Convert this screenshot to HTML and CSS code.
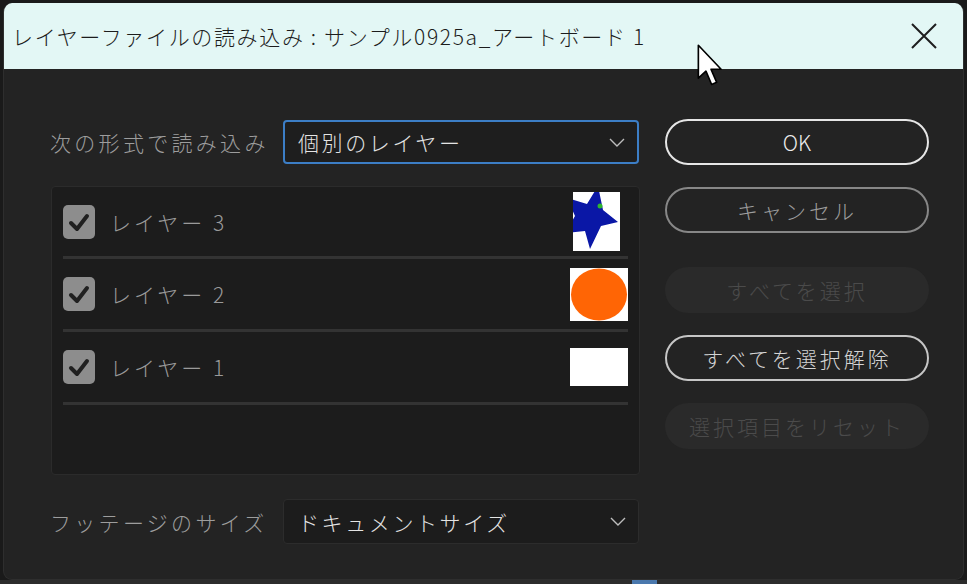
FILE: index.html
```html
<!DOCTYPE html>
<html lang="ja">
<head>
  <meta charset="UTF-8" />
  <meta name="viewport" content="width=device-width, initial-scale=1.0"/>
  <title>レイヤーファイルの読み込み</title>
  <link rel="stylesheet" href="styles.css">
</head>
<body>

  <div class="window">
    <div class="titlebar">
      <span class="title">レイヤーファイルの読み込み : サンプル0925a_アートボード 1</span>
      <svg class="close" width="26" height="26" viewBox="0 0 26 26">
        <path d="M1 1 L25 25 M25 1 L1 25" stroke="#1e1e1e" stroke-width="2" fill="none"/>
      </svg>
    </div>

    <div class="content">
      <div class="left">
        <div class="field">
          <label>次の形式で読み込み</label>
          <div class="select focused">
            <span>個別のレイヤー</span>
            <svg class="chevron" width="16" height="9" viewBox="0 0 16 9"><path d="M1 1 L8 8 L15 1" stroke="#bdbdbd" stroke-width="1.4" fill="none"/></svg>
          </div>
        </div>

        <div class="layers">
          <div class="layer">
            <span class="check"><svg width="32" height="34" viewBox="0 0 32 34"><path d="M8 18 L14 24 L24 11" stroke="#202020" stroke-width="4" fill="none" stroke-linecap="round" stroke-linejoin="round"/></svg></span>
            <span class="name">レイヤー 3</span>
            <span class="thumb-slot">
              <svg class="thumb star" width="47" height="59" viewBox="0 0 47 59">
                <rect width="47" height="59" fill="#fff"/>
                <polygon points="25,-6 30,18 45,30 28,34 17,57 12,39 -8,41 2,24 -6,6 14,12" fill="#0a17a6"/>
                <circle cx="27" cy="14" r="2.5" fill="#2fb52f"/>
              </svg>
            </span>
          </div>
          <div class="layer">
            <span class="check"><svg width="32" height="34" viewBox="0 0 32 34"><path d="M8 18 L14 24 L24 11" stroke="#202020" stroke-width="4" fill="none" stroke-linecap="round" stroke-linejoin="round"/></svg></span>
            <span class="name">レイヤー 2</span>
            <span class="thumb-slot">
              <svg class="thumb" width="58" height="53" viewBox="0 0 58 53">
                <rect width="58" height="53" fill="#fff"/>
                <ellipse cx="29" cy="26.5" rx="28" ry="26" fill="#ff6505"/>
              </svg>
            </span>
          </div>
          <div class="layer">
            <span class="check"><svg width="32" height="34" viewBox="0 0 32 34"><path d="M8 18 L14 24 L24 11" stroke="#202020" stroke-width="4" fill="none" stroke-linecap="round" stroke-linejoin="round"/></svg></span>
            <span class="name">レイヤー 1</span>
            <span class="thumb-slot">
              <span class="blank"></span>
            </span>
          </div>
        </div>

        <div class="field footage">
          <label>フッテージのサイズ</label>
          <div class="select">
            <span>ドキュメントサイズ</span>
            <svg class="chevron" width="16" height="9" viewBox="0 0 16 9"><path d="M1 1 L8 8 L15 1" stroke="#bdbdbd" stroke-width="1.4" fill="none"/></svg>
          </div>
        </div>
      </div>

      <div class="right">
        <button class="btn primary">OK</button>
        <button class="btn cancel">キャンセル</button>
        <button class="btn disabled gap">すべてを選択</button>
        <button class="btn secondary">すべてを選択解除</button>
        <button class="btn disabled">選択項目をリセット</button>
      </div>
    </div>

    <svg class="cursor" width="28" height="43" viewBox="0 0 22 34">
      <path d="M1 1 L1 27 L7 21.5 L11.5 32 L15.5 30.3 L11 20 L19 20 Z" fill="#fff" stroke="#000" stroke-width="1.3" stroke-linejoin="round"/>
    </svg>
  </div>

  <div class="taskbar"><span class="tab"></span></div>

</body>
</html>
```

FILE: styles.css
```css
body {
  margin: 0;
  background: #1a1a1a;
  font-family: "Noto Sans CJK JP", "Noto Sans", sans-serif;
  font-weight: 300;
  width: 967px;
  height: 584px;
  overflow: hidden;
}

.window {
  position: relative;
  margin: 3px 3px 0 3px;
  width: 961px;
  height: 577px;
  background: #232323;
  border-radius: 9px;
  overflow: hidden;
  box-sizing: border-box;
  border: 1px solid #2e2e2e;
  border-top: none;
}

.titlebar {
  height: 66px;
  background: #e3f7f5;
  display: flex;
  align-items: center;
  justify-content: space-between;
  padding: 0 26px 0 8px;
}

.title {
  font-size: 21px;
  letter-spacing: 1.65px;
  color: #1c1c1c;
  white-space: nowrap;
}

.content {
  display: flex;
  gap: 25px;
  padding: 51px 0 0 46px;
}

.left {
  width: 590px;
}

.field {
  display: flex;
  align-items: center;
}

.field label {
  width: 233px;
  font-size: 21px;
  letter-spacing: 3.3px;
  color: #9d9d9d;
  white-space: nowrap;
}

.select {
  width: 356px;
  height: 44px;
  box-sizing: border-box;
  border: 1px solid #2c2c2c;
  border-radius: 4px;
  background: #1c1c1c;
  display: flex;
  align-items: center;
  justify-content: space-between;
  padding: 0 12px 0 14px;
  font-size: 21px;
  letter-spacing: 2.6px;
  color: #e4e4e4;
}

.select.focused {
  border: 2px solid #3c7ec6;
  background: #1e1e1e;
  padding-left: 13px;
}

.layers {
  margin: 22px 0 0 1px;
  height: 289px;
  box-sizing: border-box;
  border: 1px solid #2b2b2b;
  border-radius: 4px;
  background: #1c1c1c;
}

.layer {
  margin: 0 11px 0 11px;
  height: 72px;
  box-sizing: border-box;
  border-bottom: 3px solid #333333;
  display: flex;
  align-items: center;
}

.layer + .layer {
  height: 73px;
}

.check {
  width: 32px;
  height: 34px;
  border-radius: 5px;
  background: #8d8d8d;
  display: flex;
}

.name {
  margin-left: 15px;
  font-size: 21px;
  letter-spacing: 3px;
  color: #9a9a9a;
  flex: 1;
}

.thumb-slot {
  width: 58px;
  display: flex;
  justify-content: center;
}

.thumb {
  display: block;
}

.thumb.star {
  margin-right: 6px;
}

.blank {
  width: 58px;
  height: 38px;
  background: #fff;
}

.footage {
  margin-top: 24px;
}

.footage .select {
  height: 45px;
}

.right {
  width: 264px;
  display: flex;
  flex-direction: column;
  margin-top: -1px;
}

.btn {
  height: 46px;
  margin-bottom: 22px;
  border-radius: 23px;
  font-family: inherit;
  font-weight: 300;
  font-size: 21px;
  letter-spacing: 3px;
  background: #232323;
  box-sizing: border-box;
  padding: 0;
}

.btn.gap {
  margin-top: 12px;
}

.primary {
  border: 2px solid #e6e6e6;
  color: #ededed;
  letter-spacing: 0;
}

.cancel {
  border: 2px solid #878787;
  color: #9d9d9d;
}

.secondary {
  border: 2px solid #c6c6c6;
  color: #d4d4d4;
}

.disabled {
  border: none;
  background: #2a2a2a;
  color: #4b4b4b;
}

.cursor {
  position: absolute;
  left: 693px;
  top: 41px;
}

.taskbar {
  height: 4px;
  background: #2c2c2c;
}

.tab {
  display: block;
  margin-left: 632px;
  width: 25px;
  height: 4px;
  background: #4a78ad;
}
```
